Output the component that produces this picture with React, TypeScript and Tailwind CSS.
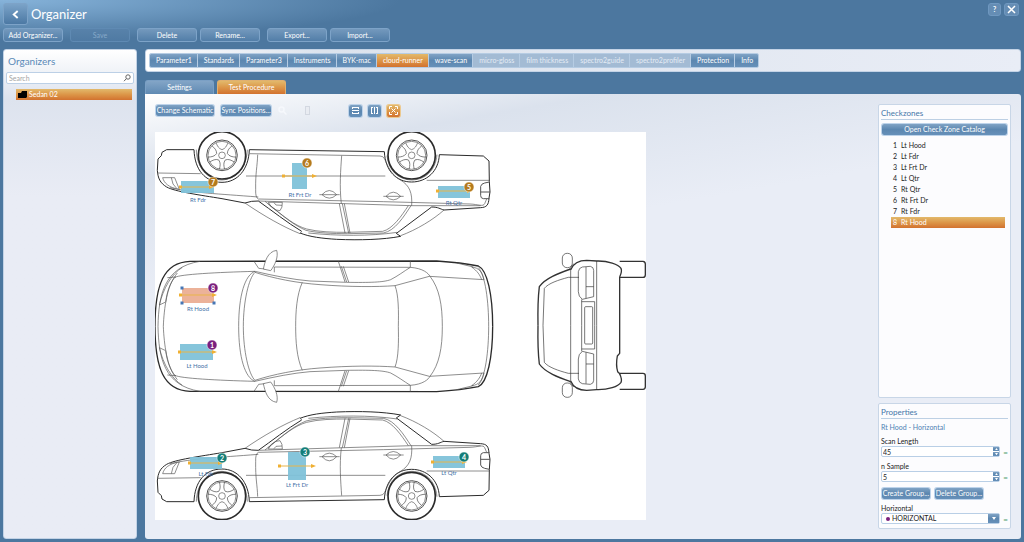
import { useState } from 'react';
import type { ReactNode } from 'react';
import clsx from 'clsx';

type Marker = {
  id: number;
  name: string;
  badge: [number, number];
  rect: [number, number, number, number];
  line: [number, number, number];
  label: [number, number];
  color: string;
};

const AMBER = '#b57a1c';
const PURPLE = '#7a1f7e';
const TEAL = '#147d78';

const MARKERS: Marker[] = [
  { id: 1, name: 'Lt Hood', rect: [25, 212, 33, 16], line: [24, 61, 220], badge: [57, 213], label: [42, 236], color: PURPLE },
  { id: 2, name: 'Lt Fdr', rect: [35, 325, 32, 12], line: [34, 67, 331], badge: [67, 326], label: [51, 344], color: TEAL },
  { id: 3, name: 'Lt Frt Dr', rect: [133, 320, 18, 28], line: [124, 160, 334], badge: [150, 320], label: [142, 355], color: TEAL },
  { id: 4, name: 'Lt Qtr', rect: [278, 324, 32, 12], line: [277, 311, 330], badge: [309, 325], label: [294, 343], color: TEAL },
  { id: 5, name: 'Rt Qtr', rect: [283, 54, 32, 12], line: [282, 316, 59], badge: [314, 55], label: [299, 73], color: AMBER },
  { id: 6, name: 'Rt Frt Dr', rect: [137, 31, 15, 26], line: [128, 161, 44], badge: [152, 31], label: [145, 65], color: AMBER },
  { id: 7, name: 'Rt Fdr', rect: [26, 49, 33, 12], line: [25, 58, 55], badge: [58, 50], label: [43, 70], color: AMBER },
  { id: 8, name: 'Rt Hood', rect: [27, 156, 32, 15], line: [25, 61, 163], badge: [58, 156], label: [43, 179], color: PURPLE },
];

const MODULES = [
  { name: 'Parameter1' },
  { name: 'Standards' },
  { name: 'Parameter3' },
  { name: 'Instruments' },
  { name: 'BYK-mac' },
  { name: 'cloud-runner' },
  { name: 'wave-scan' },
  { name: 'micro-gloss', disabled: true },
  { name: 'film thickness', disabled: true },
  { name: 'spectro2guide', disabled: true },
  { name: 'spectro2profiler', disabled: true },
  { name: 'Protection' },
  { name: 'Info' },
];

const BLUE = 'bg-linear-to-b from-[#80a3c5] via-[#5c87b0] to-[#6690b9] text-white';
const ORANGE = 'bg-linear-to-b from-[#e2b96b] via-[#dc9648] to-[#d2722f] text-white';

function HeaderButton({ children, disabled }: { children: ReactNode; disabled?: boolean }) {
  return (
    <button
      disabled={disabled}
      className="h-[14px] w-[60px] rounded-[3px] border border-[#7da3c8] bg-linear-to-b from-[#7499bd] to-[#527ea8] leading-none text-white disabled:border-[#5f8ab3] disabled:from-[#5882aa] disabled:to-[#4f7aa3] disabled:text-[#86a9c9]"
    >
      {children}
    </button>
  );
}

function SmallButton({ children, className }: { children: ReactNode; className?: string }) {
  return (
    <button className={clsx('h-[11px] whitespace-nowrap rounded-[2px] leading-none ring-1 ring-[#bdd3ea]', BLUE, className)}>
      {children}
    </button>
  );
}

function Wheel({ cx }: { cx: number }) {
  return (
    <g transform={`translate(${cx} 273)`}>
      <circle r="71" fill="#fff" strokeWidth="5" stroke="#2b2b2b" />
      <circle r="46" strokeWidth="3" />
      <circle r="42" />
      <circle r="10" />
      {[36, 108, 180, 252, 324].map((a) => (
        <path
          key={a}
          transform={`rotate(${a})`}
          d="M-18 -38 C-14 -28 -10 -20 0 -17 C10 -20 14 -28 18 -38"
        />
      ))}
    </g>
  );
}

function SideView() {
  return (
    <>
      <g strokeWidth="3" stroke="#2b2b2b">
        <path d="M50 178 C30 190 24 204 22 228 L24 262 L34 272 L36 282 L50 290 L132 290 C134 230 165 192 216 192 C262 192 296 230 298 290 L703 284 C706 225 740 193 785 193 C830 193 866 225 868 275 L1000 271 L1017 256 L1018 194 L1020 163 L1017 145 C1016 124 1010 117 992 116 L882 109 C870 112 865 118 845 118 L738 38" />
        <path d="M50 178 C75 164 150 154 216 143 L285 130 Q305 137 325 136 C365 108 410 72 455 45 M450 40 C480 28 515 24 560 21 C630 18 700 20 752 30 L740 38" />
      </g>
      <g>
        <path d="M285 130 C340 92 400 58 450 38 L455 45" />
        <path d="M752 32 C800 50 850 80 882 109" />
        <path d="M60 176 C130 160 200 158 325 148 M325 136 L387 134 L783 122 M325 142 L700 134 L960 127 C985 126 1000 118 1004 128 L1010 142" />
        <path d="M783 122 L992 122" />
        <path d="M22 220 L152 218 M288 211 L706 211 M830 198 L1018 198" />
        <path d="M139 290 C140 238 170 200 216 199 M292 290 C290 240 262 202 216 199 M711 272 C716 226 746 200 785 199 C826 200 856 226 861 275" />
        <path d="M38 206 C42 190 56 176 88 171 L74 206 Z M64 206 Q66 184 80 174" />
        <path d="M355 132 L364 118 Q378 106 390 107 Q398 116 397 132 Z M372 131 L378 124 L396 123" />
        <path d="M325 142 Q316 146 317 170 C316 220 322 240 323 275 M298 278 L690 271" />
        <path d="M345 135 C400 90 430 64 468 48 C500 40 550 38 592 38 L700 40 C735 46 762 90 783 122" />
        <path d="M353 129 C405 86 435 62 470 52 C505 43 550 42 590 42 L698 45 C728 52 755 92 775 122" />
        <path d="M475 40 C560 31 660 30 742 42" />
        <path d="M568 128 L585 40 M577 128 L596 40 M583 128 L600 40" />
        <path d="M574 128 C568 180 572 230 575 272" />
        <path d="M785 122 C787 160 780 182 750 200 C722 216 712 245 704 262 Q700 271 690 271" />
        <path d="M516 155 Q538 134 560 155 Q538 180 516 155 M508 155 H569" />
        <path d="M708 150 Q730 129 752 150 Q730 175 708 150 M700 150 H761" />
        <path d="M1018 143 L1000 143 Q992 144 992 152 L992 180 Q994 188 1004 190 L1018 193 M992 163 H1020" strokeWidth="3" />
      </g>
      <Wheel cx={216} />
      <Wheel cx={785} />
    </>
  );
}

function TopHalf() {
  return (
    <>
      <g strokeWidth="4" stroke="#2b2b2b">
        <path d="M15 244 C15 120 40 52 120 49 L860 48 C920 52 960 58 985 63 C1012 75 1028 150 1028 244" />
      </g>
      <path d="M24 244 C26 150 42 66 150 49 M40 244 C42 190 52 120 75 97 M52 98 L78 96 M97 67 C64 88 40 130 28 180 L45 172" />
      <path d="M47 172 C52 130 66 105 82 84 M75 97 C90 88 200 82 315 79" />
      <path d="M315 79 C285 90 266 150 266 244 M315 82 C296 100 280 170 280 244" />
      <path d="M315 79 C370 92 430 104 480 108 L590 112 C660 113 700 112 722 104 C745 92 760 80 781 67" />
      <path d="M315 82 C370 100 440 114 510 119 C600 126 680 126 735 122" />
      <path d="M457 112 C440 150 437 200 437 244 M735 122 C746 150 746 200 745 244" />
      <path d="M735 122 L838 94 L1002 104 M781 67 C820 70 835 85 840 94 C868 130 877 180 877 244" />
      <path d="M985 68 C1006 90 1016 170 1016 244 M965 66 C988 68 998 84 1002 104 M965 66 C982 78 990 90 995 104 M920 54 L970 66" />
      <path d="M373 66 L781 67 M373 66 L373 82 M781 48 L781 67 M312 49 L326 70 L345 72" />
      <path d="M565 49 L570 64 L585 111 M574 64 L590 111 M580 64 L596 111" />
      <path d="M340 72 C345 50 352 20 380 16 C386 35 375 60 362 77 Z" fill="#fff" />
    </>
  );
}

function FrontView() {
  return (
    <>
      {['', 'translate(0 482) scale(1 -1)'].map((t) => (
        <g key={t} transform={t}>
          <rect x="112" y="25" width="30" height="43" rx="14" />
          <path d="M39 241 C38 190 40 150 43 125 C60 100 100 85 137 72" strokeWidth="4" />
          <path d="M54 241 L58 130 C70 115 100 105 130 97 L162 97 M137 72 V241 M134 72 L146 56" />
          <path d="M137 74 C145 55 160 46 185 46 L215 48 C250 47 280 58 288 70 Q292 78 284 96" strokeWidth="4" />
          <path d="M215 48 V241 M209 170 V241" />
          <path d="M172 66 L196 64 Q206 66 206 76 L206 155 L172 163 Q160 155 160 140 L160 80 Q162 68 172 66 Z M183 66 V160 M183 125 H206" />
          <path d="M170 163 V241 M170 170 H209" />
          <path d="M284 49 H354 Q361 50 361 57 V89 Q361 97 354 97 H284" strokeWidth="4" />
        </g>
      ))}
      <rect x="179" y="185" width="24" height="112" rx="3" />
      <path d="M284 96 V325 L277 333 Q272 360 278 380 L286 388" strokeWidth="4" />
    </>
  );
}

function Schematic({ selected, onSelect }: { selected: number; onSelect: (id: number) => void }) {
  return (
    <svg viewBox="0 0 1473 1164" className="block w-[491px] bg-white" role="img" aria-label="Sedan schematic">
      <g fill="none" stroke="#555" strokeWidth="2" strokeLinejoin="round">
        <g transform="translate(-15 343) scale(1 -1)"><SideView /></g>
        <g transform="translate(-15 339)">
          <TopHalf />
          <g transform="translate(0 488) scale(1 -1)"><TopHalf /></g>
        </g>
        <g transform="translate(-15 819)"><SideView /></g>
        <g transform="translate(1110 339)" stroke="#333"><FrontView /></g>
      </g>
      <g transform="scale(3)">
        {MARKERS.map((m) => {
          const [x, y, w, h] = m.rect;
          const [x1, x2, ly] = m.line;
          const active = m.id === selected;
          return (
            <g key={m.id} onClick={() => onSelect(m.id)} className="cursor-pointer">
              <rect x={x} y={y} width={w} height={h} fill={active ? '#ebae94' : '#7fc2d9'} opacity="0.95" />
              <path d={`M${x1} ${ly} H${x2 - 3}`} stroke="#e9b548" />
              <rect x={x1 - 1} y={ly - 1.5} width="3" height="3" fill="#f0b032" />
              <path d={`M${x2 - 4} ${ly - 2} l5 2 l-5 2 z`} fill="#f0b032" />
              {active && (
                <g fill="#4677b5">
                  <rect x={x - 1.5} y={y - 1.5} width="3" height="3" />
                  <rect x={x - 1.5} y={y + h - 1.5} width="3" height="3" />
                  <rect x={x + w - 1.5} y={y + h - 1.5} width="3" height="3" />
                </g>
              )}
              <circle cx={m.badge[0]} cy={m.badge[1]} r="5" fill={m.color} stroke="#fff" strokeWidth="0.5" />
              <text x={m.badge[0]} y={m.badge[1] + 2.5} textAnchor="middle" fontSize="7" fontWeight="700" fill="#fff">
                {m.id}
              </text>
              <text x={m.label[0]} y={m.label[1]} textAnchor="middle" fontSize="6" fill="#4671a8">
                {m.name}
              </text>
            </g>
          );
        })}
      </g>
    </svg>
  );
}

function ToolIcon({ label, active, children }: { label: string; active?: boolean; children: ReactNode }) {
  return (
    <button
      aria-label={label}
      className={clsx('flex h-[12px] w-[13px] items-center justify-center rounded-[2px] ring-1', active ? ORANGE : BLUE, active ? 'ring-[#ecc98f]' : 'ring-[#bdd3ea]')}
    >
      <svg viewBox="0 0 9 9" className="h-[9px] w-[9px]" fill="none" stroke="#fff">
        {children}
      </svg>
    </button>
  );
}

function EqualSign() {
  return <span className="w-[8px] text-right text-[8px] font-bold leading-none text-[#4f9c6c]">=</span>;
}

function NumberField({ id, label, value, onChange }: { id: string; label: string; value: number; onChange: (n: number) => void }) {
  return (
    <div className="mt-[4px]">
      <label htmlFor={id} className="block leading-[10px]">{label}</label>
      <div className="flex items-center">
        <div className="flex h-[11px] flex-1 rounded-[2px] border border-[#b9cfe6] bg-white">
          <input
            id={id}
            value={value}
            onChange={(e) => onChange(Number(e.target.value) || 0)}
            className="w-0 flex-1 px-px leading-none outline-none"
          />
          <div className="flex w-[6px] flex-col gap-px">
            <button aria-label={`Increase ${label}`} onClick={() => onChange(value + 1)} className={clsx('flex flex-1 items-center justify-center', BLUE)}>
              <svg viewBox="0 0 4 3" className="w-[3px]"><path d="M0 3L2 0L4 3Z" fill="#fff" /></svg>
            </button>
            <button aria-label={`Decrease ${label}`} onClick={() => onChange(value - 1)} className={clsx('flex flex-1 items-center justify-center', BLUE)}>
              <svg viewBox="0 0 4 3" className="w-[3px]"><path d="M0 0L2 3L4 0Z" fill="#fff" /></svg>
            </button>
          </div>
        </div>
        <EqualSign />
      </div>
    </div>
  );
}

export default function App() {
  const [module, setModule] = useState('cloud-runner');
  const [tab, setTab] = useState('Test Procedure');
  const [selected, setSelected] = useState(8);
  const [scanLength, setScanLength] = useState(45);
  const [samples, setSamples] = useState(5);
  const current = MARKERS.find((m) => m.id === selected);

  return (
    <div className="flex min-h-screen flex-col bg-[#4c779f] bg-[radial-gradient(ellipse_400px_40px_at_0_0,#86b3da,transparent)] px-[3px] pb-[3px] font-['Lato','Open_Sans',sans-serif] text-[7px] text-[#222]">
      <header className="pt-[3px]">
        <div className="flex items-start justify-between">
          <div className="flex items-center gap-[3px]">
            <button aria-label="Back" className="flex h-[22px] w-[25px] items-center justify-center rounded-[3px] border border-[#7da3c8] bg-linear-to-b from-[#7ba3c8] to-[#4c79a4]">
              <svg viewBox="0 0 8 10" className="h-[9px] w-[7px]" fill="none" stroke="#fff" strokeWidth="2.2"><path d="M6.5 1L2 5L6.5 9" /></svg>
            </button>
            <h1 className="text-[13px] leading-none text-white">Organizer</h1>
          </div>
          <div className="flex gap-[3px] pr-[2px]">
            <button aria-label="Help" className="h-[13px] w-[13px] rounded-[3px] border border-[#6f98c0] bg-[#658db4] font-bold leading-none text-white">?</button>
            <button aria-label="Close" className="flex h-[13px] w-[15px] items-center justify-center rounded-[3px] border border-[#6f98c0] bg-[#658db4]">
              <svg viewBox="0 0 9 9" className="h-[9px] w-[9px]" stroke="#fff" strokeWidth="1.5"><path d="M1 1L8 8M8 1L1 8" /></svg>
            </button>
          </div>
        </div>
        <div className="mt-[3px] flex gap-[7px]">
          <HeaderButton>Add Organizer...</HeaderButton>
          <HeaderButton disabled>Save</HeaderButton>
          <div className="flex gap-[3px]">
            <HeaderButton>Delete</HeaderButton>
            <HeaderButton>Rename...</HeaderButton>
          </div>
          <div className="flex gap-[3px]">
            <HeaderButton>Export...</HeaderButton>
            <HeaderButton>Import...</HeaderButton>
          </div>
        </div>
      </header>

      <div className="mt-[7px] flex flex-1 gap-[8px]">
        <aside className="flex w-[134px] shrink-0 flex-col rounded-[3px] border border-[#c3d3e6] bg-linear-to-b from-white via-[#dde3ee] via-10% to-[#e9ecf5] to-30% px-[2px]">
          <h2 className="px-[2px] pt-[5px] text-[10px] leading-[13px] text-[#5b8ab8]">Organizers</h2>
          <label className="mt-[4px] flex h-[12px] items-center rounded-[2px] border border-[#bcd0e6] bg-white px-[2px]">
            <input type="search" aria-label="Search" placeholder="Search" className="w-0 flex-1 leading-none outline-none placeholder:text-[#a5a5a5]" />
            <svg viewBox="0 0 8 8" className="h-[8px] w-[8px]" fill="none" stroke="#666"><circle cx="5" cy="3" r="2.2" /><path d="M3.4 4.6L1 7.2" /></svg>
          </label>
          <ul className="mt-[5px] pl-[10px] pr-[2px]">
            <li>
              <button className={clsx('flex h-[11px] w-full items-center gap-[2px] px-[2px]', ORANGE)}>
                <svg viewBox="0 0 9 7" className="h-[7px] w-[9px]"><path d="M0 2L3 2L4 0H9V6L8 7H0Z" /></svg>
                <span className="leading-none">Sedan 02</span>
              </button>
            </li>
          </ul>
        </aside>

        <main className="flex min-w-0 flex-1 flex-col">
          <nav className="flex rounded-[3px] border border-[#c3d3e6] bg-linear-to-r from-white via-[#dce3ed] via-20% to-[#e9edf6] px-[3px] py-[3px]">
            <div className="flex overflow-hidden rounded-[2px] border border-[#b6cce3]">
              {MODULES.map((m) => (
                <button
                  key={m.name}
                  disabled={m.disabled}
                  onClick={() => setModule(m.name)}
                  className={clsx(
                    'h-[13px] whitespace-nowrap border-r border-[#b6cce3] pl-[6px] pr-[5px] leading-none last:border-r-0',
                    m.disabled ? 'bg-[#a3bbd4] text-[#e3ebf4]' : m.name === module ? ORANGE : BLUE,
                  )}
                >
                  {m.name}
                </button>
              ))}
            </div>
          </nav>

          <div className="mt-[8px] flex gap-[3px]" role="tablist">
            {['Settings', 'Test Procedure'].map((t) => (
              <button
                key={t}
                role="tab"
                aria-selected={t === tab}
                onClick={() => setTab(t)}
                className={clsx('h-[14px] w-[69px] rounded-t-[3px] border border-b-0 leading-none', t === tab ? ORANGE : 'bg-linear-to-b from-[#83a5c7] to-[#5f8ab3] text-white', t === tab ? 'border-[#e0b070]' : 'border-[#7ba0c5]')}
              >
                {t}
              </button>
            ))}
          </div>

          <section className="flex flex-1 justify-between rounded-[3px] rounded-tl-none bg-[linear-gradient(170deg,#ffffff_0,#dbe2ed_80px,#e9edf6_200px)] p-[10px]">
            <div>
              <div className="flex h-[13px] items-center pl-px">
                <SmallButton className="w-[58px]">Change Schematic</SmallButton>
                <SmallButton className="ml-[7px] w-[50px]">Sync Positions...</SmallButton>
                <svg viewBox="0 0 9 9" className="ml-[7px] h-[9px] w-[9px]" fill="none" stroke="#f6f8fc" strokeWidth="1.5"><circle cx="3.5" cy="3.5" r="2.5" /><path d="M5.5 5.5L8.5 8.5" /></svg>
                <input
                  type="range"
                  aria-label="Zoom"
                  disabled
                  defaultValue={32}
                  className="ml-[5px] h-[9px] w-[46px] appearance-none bg-transparent [&::-webkit-slider-thumb]:h-[9px] [&::-webkit-slider-thumb]:w-[5px] [&::-webkit-slider-thumb]:appearance-none [&::-webkit-slider-thumb]:border [&::-webkit-slider-thumb]:border-[#d3d8e1] [&::-webkit-slider-thumb]:bg-[#e9ecf2]"
                />
                <div className="ml-[11px] flex gap-[6px]">
                  <ToolIcon label="Align horizontally"><path d="M1 1.5H8M1 7.5H8M1.5 1V3M7.5 1V3M1.5 6V8M7.5 6V8M1 4.5H8" /></ToolIcon>
                  <ToolIcon label="Align vertically"><path d="M1.5 1V8M7.5 1V8M1 1.5H3M1 7.5H3M6 1.5H8M6 7.5H8M4.5 1V8" /></ToolIcon>
                  <ToolIcon label="Fit to view" active><path d="M0.5 3V0.5H3M6 0.5H8.5V3M8.5 6V8.5H6M3 8.5H0.5V6M2.5 2.5L6.5 6.5M6.5 2.5L2.5 6.5" /></ToolIcon>
                </div>
              </div>
              <div className="mt-[15px]">
                <Schematic selected={selected} onSelect={setSelected} />
              </div>
            </div>

            <aside className="flex w-[133px] shrink-0 flex-col gap-[5px]">
              <div className="flex-1 rounded-[2px] border border-[#c8d6e7] bg-[#fcfcfe] px-[2px]">
                <h2 className="border-b border-[#bdd0e4] pt-[3px] text-[8px] leading-[11px] text-[#4677a8]">Checkzones</h2>
                <SmallButton className="mx-px mt-[4px] block w-[125px]">Open Check Zone Catalog</SmallButton>
                <ul className="mt-[5px] pl-[10px] pr-[3px]">
                  {MARKERS.map((m) => (
                    <li key={m.id}>
                      <button
                        onClick={() => setSelected(m.id)}
                        className={clsx('flex h-[11px] w-full items-center gap-[4px] px-[2px] leading-none', m.id === selected && ORANGE)}
                      >
                        <span>{m.id}</span>
                        <span>{m.name}</span>
                      </button>
                    </li>
                  ))}
                </ul>
              </div>

              <div className="h-[126px] rounded-[2px] border border-[#c8d6e7] bg-[#fcfcfe] px-[2px]">
                <h2 className="border-b border-[#bdd0e4] pt-[3px] text-[8px] leading-[11px] text-[#4677a8]">Properties</h2>
                <p className="mt-[3px] leading-[10px] text-[#4f80b3]">{current?.name} - Horizontal</p>
                <NumberField id="scan-length" label="Scan Length" value={scanLength} onChange={setScanLength} />
                <NumberField id="n-sample" label="n Sample" value={samples} onChange={setSamples} />
                <div className="mt-[6px] flex gap-[5px] pl-px">
                  <SmallButton className="w-[48px]">Create Group...</SmallButton>
                  <SmallButton className="w-[48px]">Delete Group...</SmallButton>
                </div>
                <label htmlFor="orientation" className="mt-[4px] block leading-[10px]">Horizontal</label>
                <div className="flex items-center">
                  <div className="relative flex h-[11px] flex-1 items-center rounded-[2px] border border-[#b9cfe6] bg-white pl-[4px]">
                    <span className="mr-[2px] h-[4px] w-[4px] rounded-full bg-[#7a1f7e]" />
                    <select id="orientation" className="h-full flex-1 appearance-none leading-none outline-none">
                      <option>HORIZONTAL</option>
                      <option>VERTICAL</option>
                    </select>
                    <span className={clsx('pointer-events-none absolute inset-y-0 right-0 flex w-[11px] items-center justify-center', BLUE)}>
                      <svg viewBox="0 0 4 3" className="w-[4px]"><path d="M0 0L2 3L4 0Z" fill="#fff" /></svg>
                    </span>
                  </div>
                  <EqualSign />
                </div>
              </div>
            </aside>
          </section>
        </main>
      </div>
    </div>
  );
}
